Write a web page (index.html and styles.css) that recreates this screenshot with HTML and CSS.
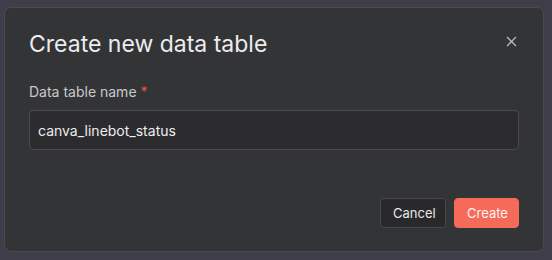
FILE: index.html
```html
<!DOCTYPE html>
<html>
<head>
<meta charset="utf-8">
<link rel="stylesheet" href="styles.css">
</head>
<body>
<div class="dialog">
  <div class="header">
    <h2 class="title">Create new data table</h2>
    <button class="close" aria-label="Close">
      <svg width="11" height="11" viewBox="0 0 11 11"><path d="M1 1L10 10M10 1L1 10" stroke="#b8b8bc" stroke-width="1.3" fill="none"/></svg>
    </button>
  </div>
  <div class="field">
    <label class="label">Data table name <span class="req">*</span></label>
    <div class="input">canva_linebot_status</div>
  </div>
  <div class="footer">
    <button class="btn cancel">Cancel</button>
    <button class="btn create">Create</button>
  </div>
</div>
</body>
</html>
```
FILE: styles.css
```css
* { box-sizing: border-box; }
html, body { margin: 0; padding: 0; }
body {
  width: 552px;
  height: 260px;
  background: #3e3d49;
  font-family: Inter, "Noto Sans", sans-serif;
  padding: 7px 8px 8px 4px;
  overflow: hidden;
}
.dialog {
  width: 540px;
  height: 245px;
  background: #333436;
  border: 1px solid #4a4a52;
  border-radius: 7px;
  padding: 21px 24px 23px 24px;
  display: flex;
  flex-direction: column;
}
.header {
  display: flex;
  justify-content: space-between;
  align-items: flex-start;
}
.title {
  margin: 0;
  font-size: 23px;
  font-weight: 400;
  line-height: 30px;
  color: #ececee;
  letter-spacing: 0;
}
.close {
  background: none;
  border: none;
  padding: 0;
  margin: 7px 2px 0 0;
  width: 11px;
  height: 11px;
  display: flex;
}
.field {
  margin-top: 24px;
  display: flex;
  flex-direction: column;
}
.label {
  font-size: 14px;
  line-height: 18px;
  color: #c9c9cc;
}
.req { color: #e5534b; }
.input {
  margin-top: 9px;
  height: 40px;
  border: 1px solid #4b4b50;
  border-radius: 4px;
  background: #2c2c2e;
  padding: 0 8px;
  display: flex;
  align-items: center;
  font-size: 14px;
  color: #ececee;
}
.footer {
  margin-top: auto;
  display: flex;
  justify-content: flex-end;
  gap: 8px;
}
.btn {
  font-family: Inter, "Noto Sans", sans-serif;
  font-size: 13px;
  height: 30px;
  border-radius: 4px;
  padding: 0 12px;
  line-height: 28px;
}
.cancel {
  background: #29292b;
  border: 1px solid #47474c;
  color: #e6e6e8;
  width: 66px;
}
.create {
  background: #f56a58;
  border: 1px solid #f56a58;
  color: #fff3f0;
  width: 65px;
}
```
